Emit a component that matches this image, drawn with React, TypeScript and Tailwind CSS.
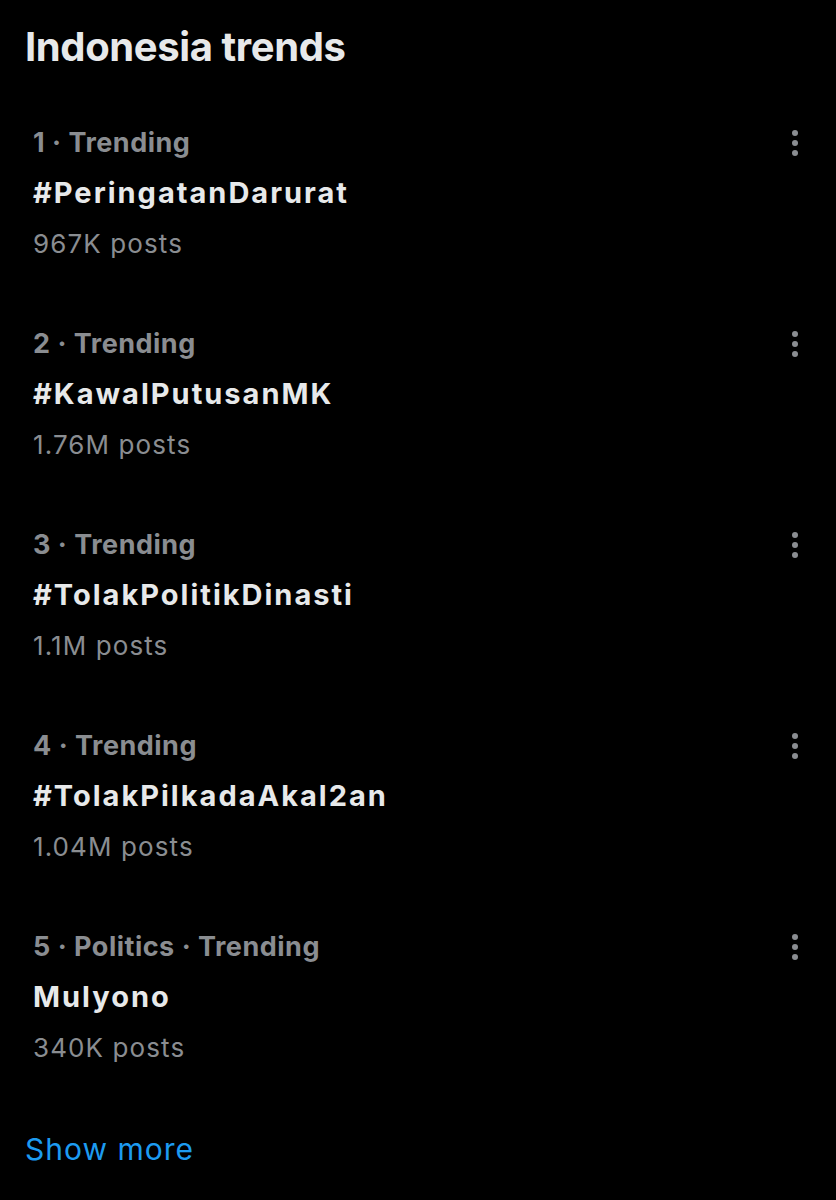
const trends = [
  { meta: "1 · Trending", name: "#PeringatanDarurat", posts: "967K posts" },
  { meta: "2 · Trending", name: "#KawalPutusanMK", posts: "1.76M posts" },
  { meta: "3 · Trending", name: "#TolakPolitikDinasti", posts: "1.1M posts" },
  { meta: "4 · Trending", name: "#TolakPilkadaAkal2an", posts: "1.04M posts" },
  { meta: "5 · Politics · Trending", name: "Mulyono", posts: "340K posts" },
];

function MoreDots() {
  return (
    <svg width="8" height="28" viewBox="0 0 8 28" className="text-[#8a8d91]">
      <circle cx="4" cy="4" r="3" fill="currentColor" />
      <circle cx="4" cy="14" r="3" fill="currentColor" />
      <circle cx="4" cy="24" r="3" fill="currentColor" />
    </svg>
  );
}

export default function App() {
  return (
    <div className="min-h-[1200px] w-[836px] bg-black pl-[25px] pr-[37px] pt-[23px] font-['Inter',sans-serif]">
      <h1 className="text-[40px] font-bold leading-[48px] tracking-[-0.4px] text-[#e7e9ea]">Indonesia trends</h1>
      <div className="mt-[47px] flex flex-col gap-[51px] pl-[8px]">
        {trends.map((t) => (
          <div key={t.name} className="flex flex-col">
            <div className="flex h-[50px] items-center justify-between">
              <span className="text-[27px] font-bold tracking-[0.5px] text-[#8a8d91]">{t.meta}</span>
              <MoreDots />
            </div>
            <div className="flex h-[50px] items-center text-[29px] font-bold tracking-[2px] text-[#e7e9ea]">{t.name}</div>
            <div className="flex h-[50px] items-center text-[26px] tracking-[1.1px] text-[#8a8d91]">{t.posts}</div>
          </div>
        ))}
      </div>
      <div className="mt-[52px] flex h-[50px] items-center text-[30px] tracking-[1px] text-[#1d9bf0]">Show more</div>
    </div>
  );
}
